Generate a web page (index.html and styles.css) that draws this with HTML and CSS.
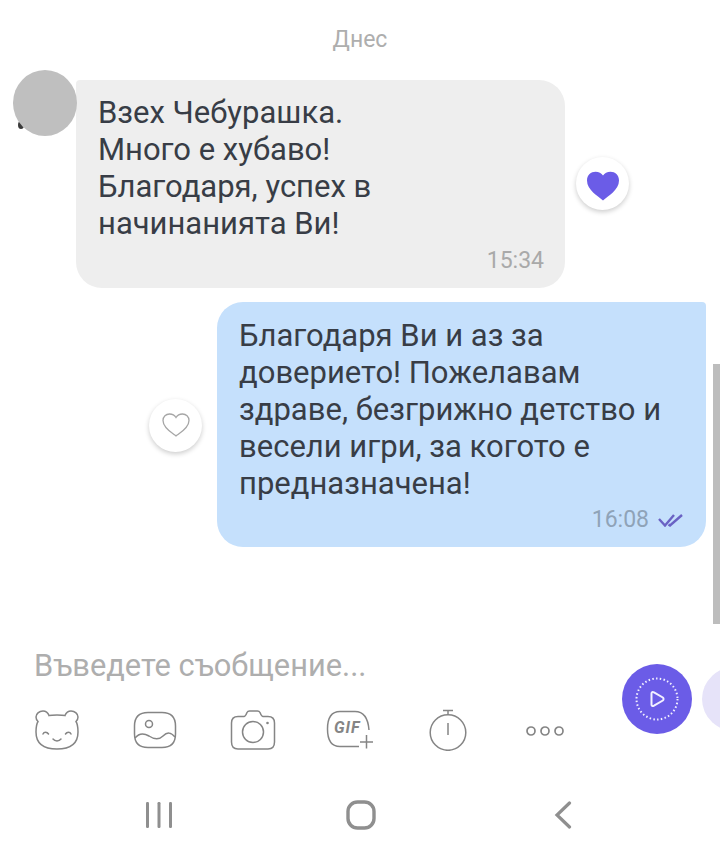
FILE: index.html
```html
<!DOCTYPE html>
<html lang="bg">
<head>
<meta charset="utf-8">
<title>Чат</title>
<link rel="stylesheet" href="styles.css">
</head>
<body>
<main class="screen">
  <section class="chat">
    <div class="date">Днес</div>
    <div class="row row-in">
      <div class="avatar-mark"></div>
      <div class="bubble bubble-in">
        <p class="msg">Взех Чебурашка.<br>Много е хубаво!<br>Благодаря, успех в<br>начинанията Ви!</p>
        <div class="meta"><span class="time">15:34</span></div>
      </div>
      <div class="avatar"></div>
      <div class="like like-in">
        <svg class="heart-fill" width="34" height="30" viewBox="0 0 34 30"><path d="M17 29.500C12 25 1 19 1 9.500C1 4 5 .8 9.500 .8C12.800 .8 15.500 2.300 17 4.500C18.500 2.300 21.200 .8 24.500 .8C29 .8 33 4 33 9.500C33 19 22 25 17 29.500Z" fill="#6b5ce7"/></svg>
      </div>
    </div>
    <div class="row row-out">
      <div class="like like-out">
        <svg width="28" height="24" viewBox="0 0 28 24"><path d="M14 23C10 20 1 15 1 7.500C1 3.500 4 1 7.500 1C10.300 1 12.700 2.300 14 4.500C15.300 2.300 17.700 1 20.500 1C24 1 27 3.500 27 7.500C27 15 18 20 14 23Z" fill="none" stroke="#a6a6a6" stroke-width="1.300"/></svg>
      </div>
      <div class="bubble bubble-out">
        <p class="msg">Благодаря Ви и аз за<br>доверието! Пожелавам<br>здраве, безгрижно детство и<br>весели игри, за когото е<br>предназначена!</p>
        <div class="meta"><span class="time time-out">16:08</span>
          <svg class="ticks" width="26" height="14" viewBox="0 0 26 14"><path d="M1 6L7 12.500L16 2M10.500 11.500L12 12.500L24 2" fill="none" stroke="#6a62c4" stroke-width="2.400"/></svg>
        </div>
      </div>
    </div>
    <div class="scrollbar"></div>
  </section>

  <section class="composer">
    <div class="placeholder">Въведете съобщение...</div>
    <div class="tools">
      <svg class="tool" width="46" height="42" viewBox="0 0 46 42" fill="none" stroke="#858585" stroke-width="1.500" stroke-linecap="round"><path d="M9 2C5 2 2 5 2 8C2 10 3 11.500 4 12.500C2.500 15 2 18 2 23C2 34 9 40 23 40C37 40 44 34 44 23C44 18 43.500 15 42 12.500C43 11.500 44 10 44 8C44 5 41 2 37 2C34 2 32 4 31 6.500C28 5.800 18 5.800 15 6.500C14 4 12 2 9 2Z"/><path d="M9 25C10 22.500 13 22.500 14.500 25M31.500 25C33 22.500 36 22.500 37 25M19 30C21 32.500 25 32.500 27 30"/></svg>
      <svg class="tool" width="44" height="38" viewBox="0 0 44 38" fill="none" stroke="#858585" stroke-width="1.500"><path d="M15 1.500H29C38 1.500 42.500 6 42.500 15V23C42.500 32 38 36.500 29 36.500H15C6 36.500 1.500 32 1.500 23V15C1.500 6 6 1.500 15 1.500Z"/><circle cx="16" cy="13" r="3.500"/><path d="M2 27C6 22 11 22 16 25C22 29 26 29 30 25C34 21 38 21 42 26"/></svg>
      <svg class="tool" width="46" height="40" viewBox="0 0 46 40" fill="none" stroke="#858585" stroke-width="1.500"><path d="M8 6.500H14C15 6.500 16 5 17 2.500C17.500 1.500 18.500 1 19.500 1H27.500C28.500 1 29.500 1.500 30 2.500C31 5 32 6.500 33 6.500H38C42 6.500 44.500 9 44.500 13V32C44.500 36.500 42 39 38 39H8C4 39 1.500 36.500 1.500 32V13C1.500 9 4 6.500 8 6.500Z"/><circle cx="23" cy="22" r="10.500"/><circle cx="37.500" cy="13" r="1.300" fill="#858585" stroke="none"/></svg>
      <div class="gif">
        <svg width="48" height="40" viewBox="0 0 48 40" fill="none" stroke="#858585" stroke-width="1.500"><path d="M33 36.500H14C6 36.500 1.500 31 1.500 19C1.500 7 6 1.500 14 1.500H29C37 1.500 42 7 43 20"/><path d="M34 32H47M40.500 25V38.500"/></svg>
        <span class="gif-label">GIF</span>
      </div>
      <svg class="tool timer" width="38" height="42" viewBox="0 0 38 42" fill="none" stroke="#858585" stroke-width="1.500"><path d="M14 1.500H24M19 1.500V6"/><circle cx="19" cy="23.500" r="17.800"/><path d="M19 14V26"/></svg>
      <svg class="tool dots" width="38" height="10" viewBox="0 0 38 10" fill="none" stroke="#858585" stroke-width="1.700"><circle cx="5" cy="5" r="4"/><circle cx="19" cy="5" r="4"/><circle cx="33" cy="5" r="4"/></svg>
    </div>
    <div class="send">
      <svg width="58" height="58" viewBox="0 0 58 58" fill="none" stroke="#f2f0ff"><circle cx="29" cy="29" r="20.500" stroke-width="2" stroke-dasharray="1.500 2.300"/><path d="M23.500 23.500C23.500 22 24.500 21.500 26 22.300L34.800 27.500C35.800 28.300 35.800 29.700 34.800 30.500L26 35.700C24.500 36.500 23.500 36 23.500 34.500Z" stroke-width="2"/></svg>
    </div>
    <div class="send-next"></div>
  </section>

  <nav class="navbar">
    <svg width="28" height="28" viewBox="0 0 28 28" fill="#8f8f8f"><rect x="1" y="1" width="3" height="26" rx="1.200"/><rect x="12.500" y="1" width="3" height="26" rx="1.200"/><rect x="24" y="1" width="3" height="26" rx="1.200"/></svg>
    <svg width="30" height="30" viewBox="0 0 30 30" fill="none" stroke="#8f8f8f" stroke-width="3.400"><rect x="2" y="2" width="26" height="26" rx="9.500"/></svg>
    <svg width="18" height="28" viewBox="0 0 18 28" fill="none" stroke="#8f8f8f" stroke-width="3.200" stroke-linecap="round"><path d="M15.500 2L3 14L15.500 26"/></svg>
  </nav>
</main>
</body>
</html>
```

FILE: styles.css
```css
* { box-sizing: border-box; }

html, body {
  margin: 0;
  padding: 0;
  background: #fff;
}

.screen {
  position: relative;
  width: 720px;
  height: 860px;
  overflow: hidden;
  display: flex;
  flex-direction: column;
  font-family: Roboto, "Noto Sans", sans-serif;
  color: #3a3f48;
}

.chat {
  position: relative;
  height: 638px;
  padding-top: 27px;
}

.date {
  height: 53px;
  font-size: 23px;
  line-height: 26px;
  text-align: center;
  color: #aeaeae;
}

.row {
  display: flex;
  align-items: center;
}

.row-in {
  position: relative;
  padding-left: 76px;
  margin-bottom: 14px;
}

.row-out {
  justify-content: flex-end;
  padding-right: 14px;
}

.avatar {
  position: absolute;
  left: 13px;
  top: -10px;
  width: 64px;
  height: 66px;
  border-radius: 50%;
  background: #bfbfbf;
}

.avatar-mark {
  position: absolute;
  left: 18px;
  top: 41px;
  width: 6px;
  height: 8px;
  border-radius: 50%;
  background: #3a3a3a;
}

.bubble {
  width: 489px;
}

.bubble-in {
  height: 208px;
  padding: 14px 21px 0 22px;
  background: #eeeeee;
  border-radius: 4px 26px 26px 26px;
}

.bubble-out {
  height: 245px;
  padding: 15px 22px 0;
  background: #c5e0fc;
  border-radius: 26px 4px 26px 26px;
}

.msg {
  margin: 0;
  font-size: 31px;
  line-height: 37px;
  color: #383d46;
}

.meta {
  display: flex;
  align-items: center;
  justify-content: flex-end;
  gap: 9px;
  height: 30px;
  margin-top: 4px;
}

.bubble-out .meta {
  margin-top: 3px;
}

.time {
  font-size: 23px;
  line-height: 26px;
  color: #a9a9a9;
}

.time-out {
  color: #8fa3b8;
}

.like {
  width: 53px;
  height: 53px;
  border-radius: 50%;
  background: #fff;
  box-shadow: 0 2px 5px rgba(0, 0, 0, .2);
  display: flex;
  align-items: center;
  justify-content: center;
}

.like-in {
  margin-left: 11px;
  margin-top: -2px;
}

.heart-fill {
  margin-top: 5px;
}

.like-out {
  margin-right: 15px;
  margin-top: 1px;
}

.scrollbar {
  position: absolute;
  right: 0;
  top: 364px;
  width: 7px;
  height: 260px;
  background: #bdbdbd;
}

.composer {
  position: relative;
  height: 138px;
  padding: 13px 0 0 34px;
}

.placeholder {
  font-size: 30.800px;
  line-height: 30px;
  color: #aeaeae;
}

.tools {
  display: flex;
  align-items: center;
  height: 44px;
  margin-top: 27px;
}

.tool {
  flex: none;
  display: block;
}

.tools > :nth-child(2) { margin-left: 53px; }
.tools > :nth-child(3) { margin-left: 53px; }
.tools > :nth-child(4) { margin-left: 50px; }
.tools > .timer { margin-left: 55px; }
.tools > .dots { margin-left: 59px; margin-top: 2px; }

.gif {
  position: relative;
  flex: none;
  width: 48px;
  height: 40px;
}

.gif svg {
  display: block;
}

.gif-label {
  position: absolute;
  left: 8px;
  top: 8px;
  font-size: 16px;
  line-height: 20px;
  font-weight: 700;
  font-style: italic;
  letter-spacing: 1px;
  color: #858585;
}

.send {
  position: absolute;
  left: 622px;
  top: 26px;
  width: 70px;
  height: 70px;
  border-radius: 50%;
  background: #6b5ce7;
  display: flex;
  align-items: center;
  justify-content: center;
}

.send-next {
  position: absolute;
  left: 702px;
  top: 28px;
  width: 70px;
  height: 66px;
  border-radius: 50%;
  background: #e6e3f9;
}

.navbar {
  height: 84px;
  padding-left: 58px;
  padding-bottom: 6px;
  display: grid;
  grid-template-columns: 202px 202px 202px;
  justify-items: center;
  align-items: center;
}
```
